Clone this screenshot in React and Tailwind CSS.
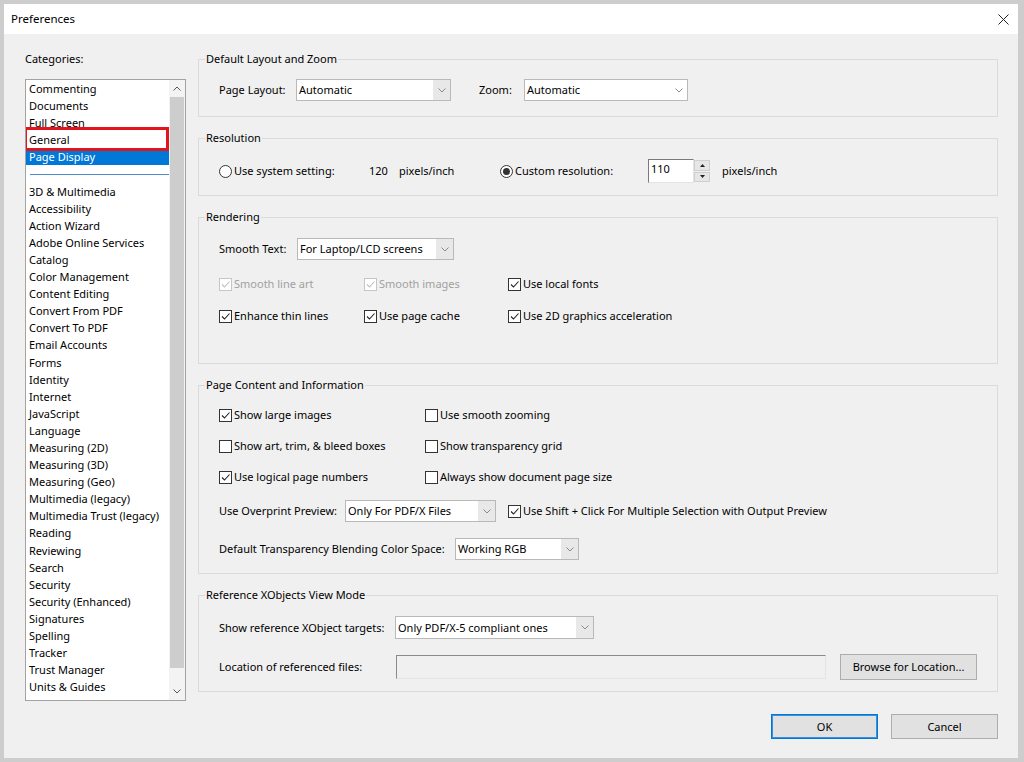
import React from "react";

const font = { fontFamily: '"Noto Sans", "Open Sans", Arial, sans-serif' };

function Chevron({ up = false, color = "#8a8a8a" }) {
  return (
    <svg width="8" height="5" viewBox="0 0 8 5">
      <polyline
        points={up ? "0.5,4.5 4,1 7.5,4.5" : "0.5,0.5 4,4 7.5,0.5"}
        fill="none"
        stroke={color}
        strokeWidth="1"
      />
    </svg>
  );
}

function Check({ color = "#222" }) {
  return (
    <svg width="11" height="11" viewBox="0 0 11 11">
      <polyline points="2,5.5 4.5,8 9.5,2.5" fill="none" stroke={color} strokeWidth="1.1" />
    </svg>
  );
}

function Checkbox({ checked, disabled, label }) {
  return (
    <div className="flex items-center h-[16px]">
      <div
        className={
          "w-[13px] h-[13px] border flex items-center justify-center bg-white " +
          (disabled ? "border-[#c6c6c6]" : "border-[#333333]")
        }
      >
        {checked && <Check color={disabled ? "#c0c0c0" : "#222"} />}
      </div>
      <span className={"ml-[2px] whitespace-nowrap " + (disabled ? "text-[#a0a0a0]" : "text-black")}>{label}</span>
    </div>
  );
}

function Radio({ checked, label }) {
  return (
    <div className="flex items-center h-[16px]">
      <div className="w-[13px] h-[13px] rounded-full border border-[#333333] bg-white flex items-center justify-center">
        {checked && <div className="w-[7px] h-[7px] rounded-full bg-[#333333]" />}
      </div>
      <span className="ml-[2px] whitespace-nowrap">{label}</span>
    </div>
  );
}

function Select({ w, h = "h-[22px]", value, gray }) {
  return (
    <div className={"flex border border-[#b9b9b9] " + w + " " + h + (gray ? " bg-[#e8e8e8]" : " bg-white")}>
      <div className="flex-1 bg-white flex items-center pl-[2px] whitespace-nowrap overflow-hidden">{value}</div>
      <div className="w-[17px] flex items-center justify-center">
        <Chevron />
      </div>
    </div>
  );
}

function Group({ title, children, className = "" }) {
  return (
    <fieldset className={"border border-[#dadada] min-w-0 " + className}>
      <legend className="ml-[6px] px-[1px] leading-[16px]">{title}</legend>
      {children}
    </fieldset>
  );
}

const categoriesTop = ["Commenting", "Documents", "Full Screen", "General"];
const categoriesBottom = [
  "3D & Multimedia",
  "Accessibility",
  "Action Wizard",
  "Adobe Online Services",
  "Catalog",
  "Color Management",
  "Content Editing",
  "Convert From PDF",
  "Convert To PDF",
  "Email Accounts",
  "Forms",
  "Identity",
  "Internet",
  "JavaScript",
  "Language",
  "Measuring (2D)",
  "Measuring (3D)",
  "Measuring (Geo)",
  "Multimedia (legacy)",
  "Multimedia Trust (legacy)",
  "Reading",
  "Reviewing",
  "Search",
  "Security",
  "Security (Enhanced)",
  "Signatures",
  "Spelling",
  "Tracker",
  "Trust Manager",
  "Units & Guides",
  "Viewing",
];

function Button({ children, primary, w }) {
  return (
    <div
      className={
        "h-[25px] flex items-center justify-center bg-[#e1e1e1] border " +
        w +
        (primary ? " border-[#0078d7] shadow-[inset_0_0_0_1px_#3a8fdc]" : " border-[#adadad]")
      }
    >
      {children}
    </div>
  );
}

export default function App() {
  return (
    <div className="w-[1024px] h-[762px] bg-[#cdcdcd] pt-[4px] pl-[4px] pr-[6px] pb-[4px] text-[11px] leading-[16px] text-black" style={font}>
      <div className="w-full h-full flex flex-col">
        {/* Title bar */}
        <div className="h-[30px] bg-white flex items-center justify-between pl-[7px] pr-[9px]">
          <span className="text-[11.5px]">Preferences</span>
          <svg width="11" height="11" viewBox="0 0 11 11">
            <line x1="0.5" y1="0.5" x2="10.5" y2="10.5" stroke="#222" strokeWidth="1" />
            <line x1="10.5" y1="0.5" x2="0.5" y2="10.5" stroke="#222" strokeWidth="1" />
          </svg>
        </div>
        {/* Body */}
        <div className="flex-1 bg-[#f0f0f0] pt-[17px] pl-[21px] pr-[20px] flex gap-[12px]">
          {/* Left column */}
          <div className="w-[161px] flex flex-col">
            <div>Categories:</div>
            <div className="mt-[12px] h-[622px] border border-[#a3a3a3] bg-white flex relative overflow-hidden">
              <div className="flex-1 overflow-hidden">
                {categoriesTop.map((c) => (
                  <div key={c} className="h-[17.1px] leading-[17px] pl-[3px] whitespace-nowrap">
                    {c}
                  </div>
                ))}
                <div className="h-[17.1px] leading-[17px] pl-[3px] bg-[#0078d7] text-white whitespace-nowrap">Page Display</div>
                <div className="h-[17.1px] flex items-center pl-[4px]">
                  <div className="h-px w-full bg-[#4d8cc9]" />
                </div>
                {categoriesBottom.map((c) => (
                  <div key={c} className="h-[17.1px] leading-[17px] pl-[3px] whitespace-nowrap">
                    {c}
                  </div>
                ))}
              </div>
              <div className="w-[16px] bg-[#f3f3f3] flex flex-col">
                <div className="h-[17px] flex items-center justify-center">
                  <Chevron up color="#555" />
                </div>
                <div className="h-[571px] mx-[1px] bg-[#cdcdcd]" />
                <div className="flex-1" />
                <div className="h-[17px] flex items-center justify-center">
                  <Chevron color="#555" />
                </div>
              </div>
              {/* annotation box */}
              <div className="absolute left-[-2px] top-[47px] w-[145px] h-[24px] border-[3px] border-[#e3141c]" />
            </div>
          </div>

          {/* Right column */}
          <div className="flex-1 flex flex-col gap-[13px]">
            <Group title="Default Layout and Zoom">
              <div className="pl-[20px] pt-[12px] pb-[15px] flex items-center">
                <div className="w-[77px]">Page Layout:</div>
                <Select w="w-[155px]" value="Automatic" gray />
                <div className="ml-[28px] w-[45px]">Zoom:</div>
                <Select w="w-[164px]" value="Automatic" />
              </div>
            </Group>

            <Group title="Resolution">
              <div className="pl-[20px] pt-[13px] pb-[12px] flex items-center">
                <div className="w-[150px]">
                  <Radio label="Use system setting:" />
                </div>
                <div className="w-[30px]">120</div>
                <div className="w-[101px]">pixels/inch</div>
                <div className="w-[148px]">
                  <Radio checked label="Custom resolution:" />
                </div>
                <div className="w-[46px] h-[24px] bg-white border border-[#e3e3e3] border-t-[#7a7a7a] border-l-[#7a7a7a] pl-[2px] leading-[18px]">110</div>
                <div className="w-[16px] h-[24px] flex flex-col gap-[1px] py-[1px]">
                  <div className="flex-1 bg-[#e6e6e6] border border-[#cfcfcf] flex items-center justify-center">
                    <svg width="5" height="3" viewBox="0 0 5 3"><polygon points="0,3 2.5,0 5,3" fill="#222" /></svg>
                  </div>
                  <div className="flex-1 bg-[#e6e6e6] border border-[#cfcfcf] flex items-center justify-center">
                    <svg width="5" height="3" viewBox="0 0 5 3"><polygon points="0,0 2.5,3 5,0" fill="#222" /></svg>
                  </div>
                </div>
                <div className="ml-[12px]">pixels/inch</div>
              </div>
            </Group>

            <Group title="Rendering">
              <div className="pl-[20px] pt-[13px] pb-[39px] flex flex-col">
                <div className="flex items-center">
                  <div className="w-[78px]">Smooth Text:</div>
                  <Select w="w-[157px]" value="For Laptop/LCD screens" gray />
                </div>
                <div className="mt-[16px] flex">
                  <div className="w-[145px]"><Checkbox checked disabled label="Smooth line art" /></div>
                  <div className="w-[144px]"><Checkbox checked disabled label="Smooth images" /></div>
                  <Checkbox checked label="Use local fonts" />
                </div>
                <div className="mt-[16px] flex">
                  <div className="w-[145px]"><Checkbox checked label="Enhance thin lines" /></div>
                  <div className="w-[144px]"><Checkbox checked label="Use page cache" /></div>
                  <Checkbox checked label="Use 2D graphics acceleration" />
                </div>
              </div>
            </Group>

            <Group title="Page Content and Information">
              <div className="pl-[20px] pt-[14px] pb-[13px] flex flex-col">
                <div className="flex">
                  <div className="w-[206px]"><Checkbox checked label="Show large images" /></div>
                  <Checkbox label="Use smooth zooming" />
                </div>
                <div className="mt-[15px] flex">
                  <div className="w-[206px]"><Checkbox label="Show art, trim, & bleed boxes" /></div>
                  <Checkbox label="Show transparency grid" />
                </div>
                <div className="mt-[15px] flex">
                  <div className="w-[206px]"><Checkbox checked label="Use logical page numbers" /></div>
                  <Checkbox label="Always show document page size" />
                </div>
                <div className="mt-[15px] flex items-center">
                  <div className="w-[126px]">Use Overprint Preview:</div>
                  <Select w="w-[151px]" value="Only For PDF/X Files" gray />
                  <div className="ml-[12px]"><Checkbox checked label="Use Shift + Click For Multiple Selection with Output Preview" /></div>
                </div>
                <div className="mt-[16px] flex items-center">
                  <div className="w-[236px]">Default Transparency Blending Color Space:</div>
                  <Select w="w-[124px]" value="Working RGB" gray />
                </div>
              </div>
            </Group>

            <Group title="Reference XObjects View Mode">
              <div className="pl-[20px] pt-[13px] pb-[11px] flex flex-col">
                <div className="flex items-center">
                  <div className="w-[176px]">Show reference XObject targets:</div>
                  <Select w="w-[199px]" h="h-[23px]" value="Only PDF/X-5 compliant ones" gray />
                </div>
                <div className="mt-[15px] flex items-center h-[26px]">
                  <div className="w-[177px]">Location of referenced files:</div>
                  <div className="w-[430px] h-[24px] bg-[#f0f0f0] border border-[#e3e3e3] border-t-[#8a8a8a] border-l-[#8a8a8a]" />
                  <div className="ml-[14px] w-[137px] h-[26px] bg-[#e1e1e1] border border-[#adadad] flex items-center justify-center">
                    Browse for Location...
                  </div>
                </div>
              </div>
            </Group>

            <div className="mt-[9px] flex justify-end gap-[13px]">
              <Button primary w="w-[107px]">OK</Button>
              <Button w="w-[107px]">Cancel</Button>
            </div>
          </div>
        </div>
      </div>
    </div>
  );
}
